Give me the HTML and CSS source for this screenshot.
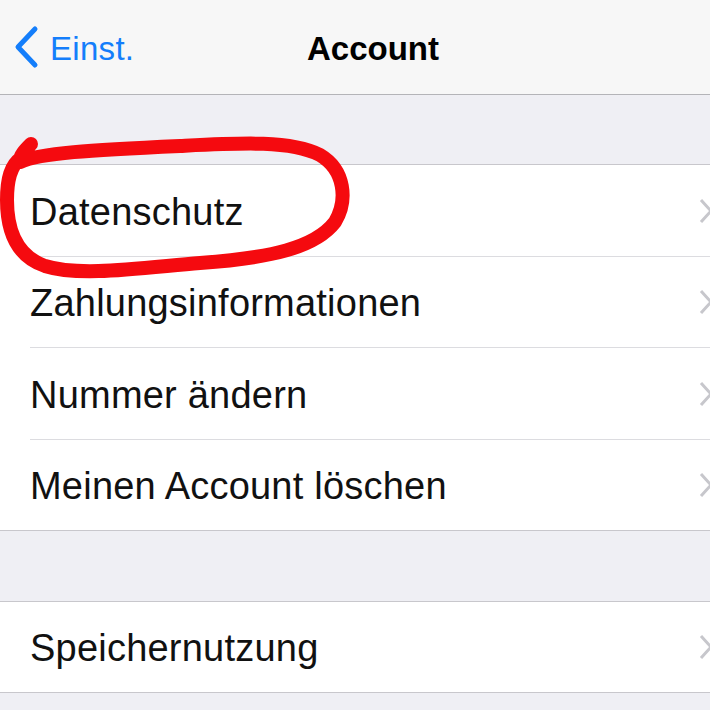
FILE: index.html
```html
<!DOCTYPE html>
<html lang="de">
<head>
  <meta charset="UTF-8" />
  <meta name="viewport" content="width=device-width, initial-scale=1.0"/>
  <title>Account</title>
  <link rel="stylesheet" href="styles.css">
</head>
<body>
  <div class="screen">
    <header class="navbar">
      <a class="back" href="#">
        <svg class="back-icon" width="26" height="44" viewBox="0 0 26 44">
          <path d="M22 4 L5 22 L22 40" fill="none" stroke="#147efb" stroke-width="5" stroke-linecap="round" stroke-linejoin="round"/>
        </svg>
        <span>Einst.</span>
      </a>
      <h1 class="title">Account</h1>
      <span></span>
    </header>

    <div class="gap"></div>

    <ul class="group">
      <li class="row"><span>Datenschutz</span><svg class="chev" width="14" height="26" viewBox="0 0 14 26"><path d="M2 2 L12 13 L2 24" fill="none" stroke="#c7c7cc" stroke-width="3"/></svg></li>
      <li class="row"><span>Zahlungsinformationen</span><svg class="chev" width="14" height="26" viewBox="0 0 14 26"><path d="M2 2 L12 13 L2 24" fill="none" stroke="#c7c7cc" stroke-width="3"/></svg></li>
      <li class="row"><span>Nummer ändern</span><svg class="chev" width="14" height="26" viewBox="0 0 14 26"><path d="M2 2 L12 13 L2 24" fill="none" stroke="#c7c7cc" stroke-width="3"/></svg></li>
      <li class="row"><span>Meinen Account löschen</span><svg class="chev" width="14" height="26" viewBox="0 0 14 26"><path d="M2 2 L12 13 L2 24" fill="none" stroke="#c7c7cc" stroke-width="3"/></svg></li>
    </ul>

    <div class="gap gap-2"></div>

    <ul class="group">
      <li class="row single"><span>Speichernutzung</span><svg class="chev" width="14" height="26" viewBox="0 0 14 26"><path d="M2 2 L12 13 L2 24" fill="none" stroke="#c7c7cc" stroke-width="3"/></svg></li>
    </ul>

    <!-- handgemalter Kreis -->
    <svg class="scribble" width="710" height="710" viewBox="0 0 710 710">
      <path d="M31 144 C25 150 19 156 20 162 C40 153 90 150 180 146 C240 143 290 140 320 155 C345 170 348 200 335 222 C315 248 270 258 200 263 C140 268 80 277 45 266 C16 256 7 230 7 200 C7 178 11 165 21 158"
        fill="none" stroke="#f50a0f" stroke-width="14" stroke-linecap="round" stroke-linejoin="round"/>
    </svg>
  </div>
</body>
</html>
```

FILE: styles.css
```css
* { margin: 0; padding: 0; box-sizing: border-box; }
html, body { overflow: hidden; }
body { font-family: "Liberation Sans", Arial, sans-serif; color: #111; background: #efeff4; }
.screen { position: relative; width: 710px; height: 710px; }

.navbar { height: 95px; background: #f7f7f7; border-bottom: 1px solid #b4b4b8; display: grid; grid-template-columns: 1fr auto 1fr; align-items: center; }
.back { display: flex; align-items: center; gap: 11px; padding-left: 13px; color: #147efb; text-decoration: none; font-size: 33px; letter-spacing: 0.3px; padding-top: 4px; }
.back-icon { margin-top: -4px; }
.title { font-size: 33px; font-weight: bold; color: #000; padding-left: 36px; padding-top: 4px; }

.gap { height: 69px; }
.gap-2 { height: 70px; }

.group { list-style: none; background: #fff; border-top: 1px solid #c8c7cc; border-bottom: 1px solid #c8c7cc; }
.row { position: relative; height: 91.5px; padding-left: 30px; padding-top: 3px; display: flex; align-items: center; justify-content: space-between; font-size: 38px; letter-spacing: 0.22px; }
.row::after { content: ""; position: absolute; left: 30px; right: 0; bottom: 0; border-bottom: 1px solid #dcdce0; }
.row:last-child { height: 90.5px; }
.row:last-child::after { display: none; }
.row.single { height: 90px; }
.chev { margin-right: -3px; margin-top: -3px; flex-shrink: 0; }

.scribble { position: absolute; left: 0; top: 0; pointer-events: none; }
```
